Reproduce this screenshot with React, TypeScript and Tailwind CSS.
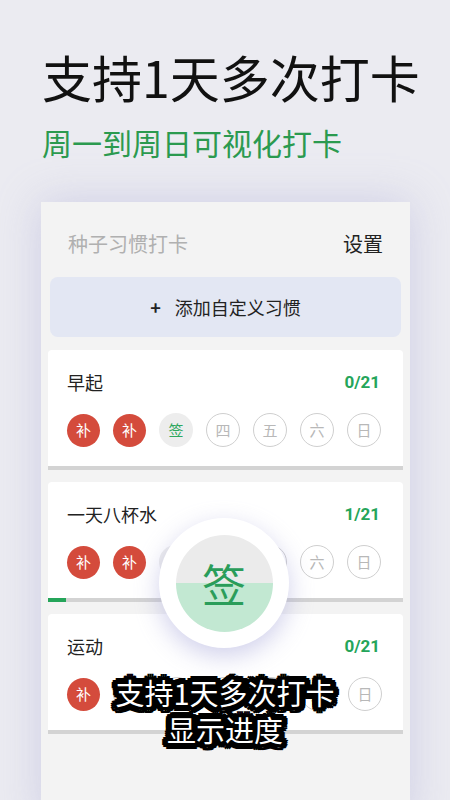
import React from 'react';

const FONT = '[font-family:"Noto_Sans_CJK_SC","Noto_Sans",sans-serif]';

type DayState = 'fix' | 'sign' | 'todo';

const DAYS = ['一', '二', '三', '四', '五', '六', '日'];

const DayDot: React.FC<{ state: DayState; label: string }> = ({ state, label }) => {
  if (state === 'fix') {
    return (
      <div className="w-[33px] h-[33px] rounded-full bg-[#d44b3c] flex items-center justify-center text-[15px] text-white">
        补
      </div>
    );
  }
  if (state === 'sign') {
    return (
      <div className="w-[34px] h-[34px] rounded-full bg-[#ededed] flex items-center justify-center text-[15px] text-[#2ea85e]">
        签
      </div>
    );
  }
  return (
    <div className="w-[34px] h-[34px] rounded-full border border-[#cfcfcf] flex items-center justify-center text-[15px] text-[#b8b8b8]">
      {label}
    </div>
  );
};

const HabitCard: React.FC<{ name: string; count: string; states: DayState[]; progress: number }> = ({
  name,
  count,
  states,
  progress,
}) => {
  return (
    <div className="bg-white rounded-t-[4px] mx-[7px] h-[120px] flex flex-col">
      <div className="flex items-center justify-between pl-[19px] pr-[23px] h-[33px] mt-[16px]">
        <span className="text-[18px] text-[#222]">{name}</span>
        <span className="text-[17px] font-bold text-[#25a55a] [font-family:Roboto,sans-serif]">{count}</span>
      </div>
      <div className="flex items-center gap-[13px] pl-[19px] mt-[14px]">
        {states.map((s, i) => (
          <DayDot key={i} state={s} label={DAYS[i]} />
        ))}
      </div>
      <div className="mt-auto h-[4px] bg-[#d3d3d3]">
        <div className="h-full bg-[#25a55a]" style={{ width: `${progress}%` }} />
      </div>
    </div>
  );
};

export default function App() {
  return (
    <div className={`w-[450px] h-[800px] overflow-hidden bg-[#ebebf1] relative ${FONT}`}>
      {/* Heading */}
      <div className="pt-[51px] pl-[42px]">
        <h1 className="text-[50px] leading-[50px] text-[#111] font-normal">支持1天多次打卡</h1>
        <p className="mt-[26px] text-[30px] leading-[30px] text-[#2b9a4f]">周一到周日可视化打卡</p>
      </div>

      {/* Phone screen */}
      <div className="mt-[45px] ml-[41px] w-[369px] h-[620px] bg-[#f3f3f3] shadow-[0_0_40px_rgba(170,170,215,0.45)]">
        <div className="flex items-center justify-between pl-[27px] pr-[27px] h-[84px]">
          <span className="text-[20px] text-[#b0b0b0]">种子习惯打卡</span>
          <span className="text-[20px] text-[#222]">设置</span>
        </div>
        <div className="mx-[9px] h-[60px] rounded-[8px] bg-[#e3e7f3] flex items-center justify-center text-[18px] text-[#222] -mt-[9px]">
          <span className="mr-[14px] font-bold">+</span>
          添加自定义习惯
        </div>
        <div className="mt-[13px] flex flex-col gap-[12px]">
          <HabitCard name="早起" count="0/21" states={['fix', 'fix', 'sign', 'todo', 'todo', 'todo', 'todo']} progress={0} />
          <HabitCard name="一天八杯水" count="1/21" states={['fix', 'fix', 'sign', 'todo', 'todo', 'todo', 'todo']} progress={5} />
          <HabitCard name="运动" count="0/21" states={['fix', 'todo', 'todo', 'todo', 'todo', 'todo', 'todo']} progress={0} />
        </div>
      </div>

      {/* Big sign-in button overlay */}
      <div className="absolute left-[159px] top-[518px] w-[130px] h-[130px] rounded-full bg-white shadow-[0_8px_24px_rgba(150,150,210,0.45)] flex items-center justify-center">
        <div className="w-[97px] h-[97px] rounded-full overflow-hidden relative flex flex-col">
          <div className="h-[48px] bg-[#ebebeb]" />
          <div className="flex-1 bg-[#c2e8d2]" />
          <span className="absolute inset-0 flex items-center justify-center text-[44px] text-[#2a9d5a]">签</span>
        </div>
      </div>

      {/* Caption with rounded black outline */}
      <div className="absolute left-0 right-0 top-[674px] text-center text-white text-[29px] leading-[37px] [paint-order:stroke_fill] [-webkit-text-stroke:6px_#000] [text-shadow:6px_0_0_#000,-6px_0_0_#000,0_6px_0_#000,0_-6px_0_#000,4px_4px_0_#000,-4px_4px_0_#000,4px_-4px_0_#000,-4px_-4px_0_#000,6px_2px_0_#000,-6px_2px_0_#000,6px_-2px_0_#000,-6px_-2px_0_#000,2px_6px_0_#000,-2px_6px_0_#000,2px_-6px_0_#000,-2px_-6px_0_#000,5px_4px_0_#000,-5px_4px_0_#000,5px_-4px_0_#000,-5px_-4px_0_#000]">
        <div>支持1天多次打卡</div>
        <div>显示进度</div>
      </div>
    </div>
  );
}
